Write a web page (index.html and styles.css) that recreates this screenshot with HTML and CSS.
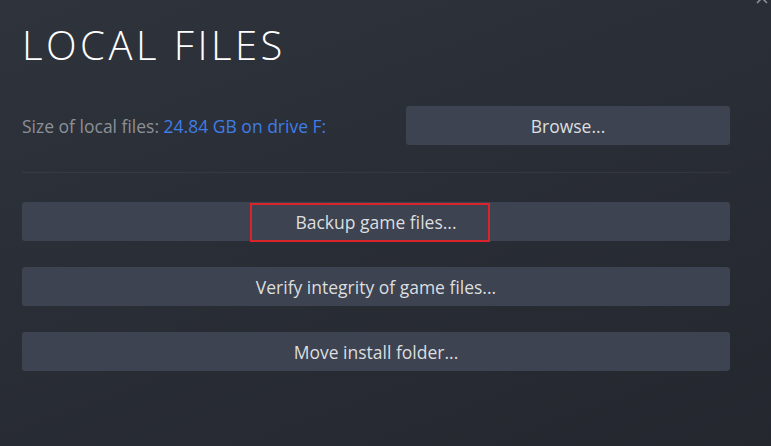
FILE: index.html
```html
<!DOCTYPE html>
<html lang="en">
<head>
<meta charset="UTF-8">
<meta name="viewport" content="width=device-width, initial-scale=1.0">
<title>Local Files</title>
<link rel="stylesheet" href="styles.css">
</head>
<body>
<div class="dialog">
    <svg class="close" width="14" height="14" viewBox="0 0 14 14">
        <path d="M2 2 L12 12 M12 2 L2 12" stroke="#8c9199" stroke-width="1.6" fill="none"/>
    </svg>
    <h1 class="title">LOCAL FILES</h1>
    <div class="size-row">
        <p class="size-label">Size of local files: <span class="size-value">24.84 GB on drive F:</span></p>
        <button class="btn browse">Browse...</button>
    </div>
    <div class="divider"></div>
    <div class="actions">
        <button class="btn wide">Backup game files...<span class="highlight"></span></button>
        <button class="btn wide">Verify integrity of game files...</button>
        <button class="btn wide">Move install folder...</button>
    </div>
</div>
</body>
</html>
```
FILE: styles.css
```css
body {
    margin: 0;
    padding: 0;
    background: #262a32;
    font-family: "Open Sans", "Noto Sans", sans-serif;
    color: #dcdedf;
}

.dialog {
    position: relative;
    width: 771px;
    height: 446px;
    box-sizing: border-box;
    padding: 20px 41px 0 22px;
    background: linear-gradient(160deg, #2f333c 0%, #2a2e36 40%, #24272e 100%);
    display: flex;
    flex-direction: column;
    overflow: hidden;
}

/* close cross peeking in the corner */
.close {
    position: absolute;
    top: -9px;
    right: 2px;
}

.title {
    margin: 0;
    font-size: 40px;
    font-weight: 300;
    letter-spacing: 3.5px;
    line-height: 50px;
    color: #ffffff;
}

.size-row {
    display: flex;
    align-items: center;
    margin-top: 36px;
}

.size-label {
    flex: 1;
    margin: 0;
    font-size: 17.5px;
    color: #8b9098;
}

.size-value {
    color: #3f7de6;
}

.btn {
    font-family: inherit;
    font-size: 17.5px;
    color: #dcdedf;
    background: #3d4350;
    border: none;
    border-radius: 3px;
    height: 39px;
    padding: 0;
    cursor: pointer;
}

.browse {
    width: 324px;
}

.divider {
    height: 1px;
    margin-top: 27px;
    background: rgba(255, 255, 255, 0.05);
}

.actions {
    display: flex;
    flex-direction: column;
    gap: 26px;
    margin-top: 29px;
}

.wide {
    position: relative;
    width: 100%;
}

/* red marker drawn over the backup button */
.highlight {
    position: absolute;
    left: 228px;
    top: 1px;
    width: 236px;
    height: 35px;
    border: 2px solid #d9242c;
}
```
